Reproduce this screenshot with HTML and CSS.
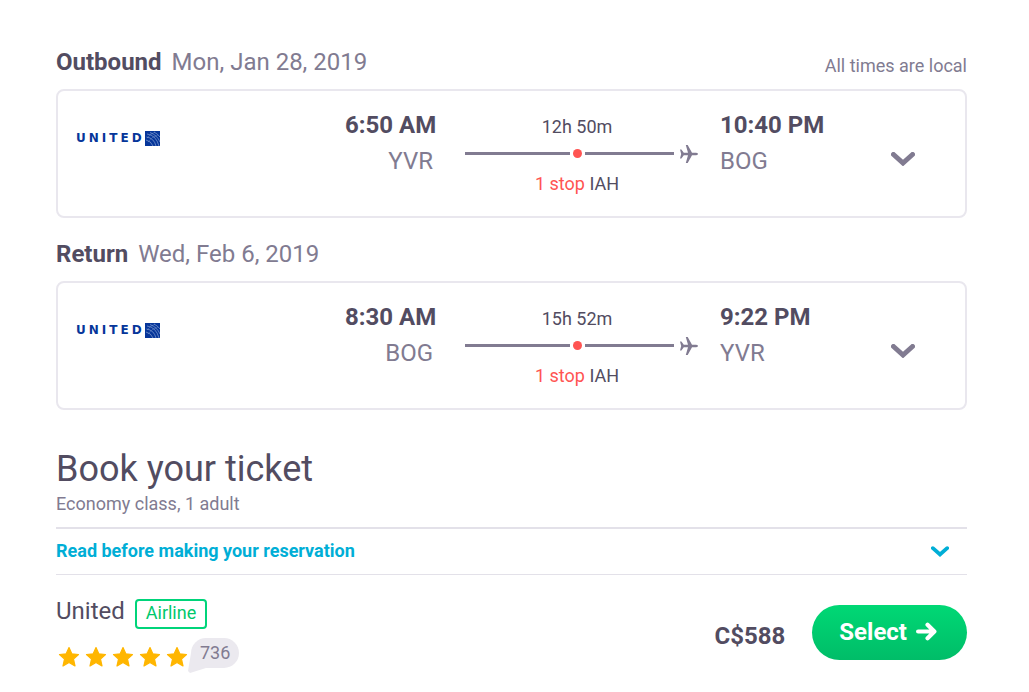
FILE: index.html
```html
<!DOCTYPE html>
<html lang="en">
<head>
    <meta charset="utf-8">
    <title>Book your ticket</title>
    <link rel="stylesheet" href="styles.css">
</head>
<body>
    <!-- shared icons -->
    <svg class="sprite" width="0" height="0">
        <symbol id="chevron" viewBox="0 0 24 14">
            <path d="M2.500 2.500L12 11l9.500-8.500" fill="none" stroke="currentColor" stroke-width="5" stroke-linecap="round"/>
        </symbol>
        <symbol id="plane" viewBox="0 0 18 18">
            <path d="M0 4.500h1.400L3.800 7.800H8L5.800 0h1.900L12 7.800h4.200c2.400.5 2.400 1.900 0 2.400H12L7.700 18H5.800L8 10.200H3.800L1.400 13.500H0L1.200 9z" fill="currentColor"/>
        </symbol>
        <symbol id="star" viewBox="0 0 22 22">
            <path d="M11 1.500l2.800 6.300 6.700.7-5 4.600 1.500 6.900-6-3.600-6 3.600 1.500-6.900-5-4.600 6.700-.7z" fill="currentColor" stroke="currentColor" stroke-width="1.200" stroke-linejoin="round"/>
        </symbol>
        <symbol id="globe" viewBox="0 0 15 15">
            <path d="M0 0h15v15H0z" fill="#06369a"/>
            <path d="M2 3Q11 4 14 15M1.500 6Q9 7 11 15M1 9Q6 10 8 15M5 1.500Q12 4 15 11M9 1Q13 3 15 6" fill="none" stroke="#9db3dd" stroke-width=".6"/>
            <path d="M2 7Q5 3 10 1M3 11Q6 6 13 4" fill="none" stroke="#9db3dd" stroke-width=".3"/>
        </symbol>
    </svg>

    <main class="page">
        <section class="trip">
            <div class="trip-head">
                <h2 class="trip-title">Outbound <span class="trip-date">Mon, Jan 28, 2019</span></h2>
                <span class="note">All times are local</span>
            </div>
            <div class="card">
                <div class="logo">UNITED<svg class="logo-mark"><use href="#globe"/></svg></div>
                <div class="point depart">
                    <div class="time">6:50 AM</div>
                    <div class="airport">YVR</div>
                </div>
                <div class="route">
                    <div class="route-text">12h 50m</div>
                    <div class="track">
                        <span class="line first"></span>
                        <span class="dot"></span>
                        <span class="line"></span>
                        <svg class="plane"><use href="#plane"/></svg>
                    </div>
                    <div class="route-text"><span class="stop">1 stop</span> IAH</div>
                </div>
                <div class="point">
                    <div class="time">10:40 PM</div>
                    <div class="airport">BOG</div>
                </div>
                <button class="toggle" type="button" aria-label="Outbound details"><svg class="chevron"><use href="#chevron"/></svg></button>
            </div>
        </section>

        <section class="trip">
            <div class="trip-head">
                <h2 class="trip-title">Return <span class="trip-date">Wed, Feb 6, 2019</span></h2>
            </div>
            <div class="card">
                <div class="logo">UNITED<svg class="logo-mark"><use href="#globe"/></svg></div>
                <div class="point depart">
                    <div class="time">8:30 AM</div>
                    <div class="airport">BOG</div>
                </div>
                <div class="route">
                    <div class="route-text">15h 52m</div>
                    <div class="track">
                        <span class="line first"></span>
                        <span class="dot"></span>
                        <span class="line"></span>
                        <svg class="plane"><use href="#plane"/></svg>
                    </div>
                    <div class="route-text"><span class="stop">1 stop</span> IAH</div>
                </div>
                <div class="point">
                    <div class="time">9:22 PM</div>
                    <div class="airport">YVR</div>
                </div>
                <button class="toggle" type="button" aria-label="Return details"><svg class="chevron"><use href="#chevron"/></svg></button>
            </div>
        </section>

        <section class="booking">
            <h1 class="booking-title">Book your ticket</h1>
            <p class="booking-class">Economy class, 1 adult</p>
            <button class="read" type="button">Read before making your reservation
                <svg class="chevron small"><use href="#chevron"/></svg>
            </button>
            <div class="offer">
                <div class="seller">
                    <div class="seller-name">United <span class="tag">Airline</span></div>
                    <div class="rating">
                        <svg class="star"><use href="#star"/></svg>
                        <svg class="star"><use href="#star"/></svg>
                        <svg class="star"><use href="#star"/></svg>
                        <svg class="star"><use href="#star"/></svg>
                        <svg class="star"><use href="#star"/></svg>
                        <span class="reviews">736</span>
                    </div>
                </div>
                <div class="price">C$588</div>
                <button class="select" type="button">Select
                    <svg class="arrow" viewBox="0 0 20 18"><path d="M2 9h15M11 2.500L17.500 9 11 15.500" fill="none" stroke="currentColor" stroke-width="4" stroke-linecap="round" stroke-linejoin="round"/></svg>
                </button>
            </div>
        </section>
    </main>
</body>
</html>
```
FILE: styles.css
```css
* {
    box-sizing: border-box;
}
body {
    margin: 0;
    background: #fff;
    color: #524c61;
    font-family: Roboto, "Liberation Sans", sans-serif;
    font-size: 18px;
    line-height: 24px;
}
h1, h2, p {
    margin: 0;
    font-weight: 400;
}
button {
    padding: 0;
    border: 0;
    background: none;
    color: inherit;
    font: inherit;
    cursor: pointer;
}
svg {
    display: block;
    flex: none;
}
.sprite {
    position: absolute;
}
.page {
    padding: 44px 62px 16px 56px;
}

/* flights */
.trip {
    margin-bottom: 18px;
}
.trip-head {
    display: flex;
    justify-content: space-between;
    align-items: flex-end;
    padding-bottom: 9px;
}
.trip-title {
    display: flex;
    gap: 10px;
    font-size: 24px;
    line-height: 36px;
    font-weight: 700;
}
.trip-date {
    color: #817b91;
    font-weight: 400;
}
.note {
    color: #817b91;
    line-height: 28px;
}
.card {
    display: grid;
    grid-template-columns: 1fr 120px 233px 193px 24px;
    padding: 16px 50px 5px 18px;
    border: 2px solid #e9e7ee;
    border-radius: 8px;
}
.logo {
    display: flex;
    height: 62px;
    align-items: center;
    color: #06369a;
    font: bold 12px "DejaVu Sans", sans-serif;
    letter-spacing: 3px;
}
.logo-mark {
    width: 15px;
    height: 15px;
}
.point {
    padding-left: 22px;
    font-size: 24px;
    line-height: 36px;
}
.depart {
    padding: 0 32px 0 0;
    text-align: right;
}
.time {
    font-weight: 700;
    white-space: nowrap;
}
.airport {
    color: #817b91;
}
.route {
    padding-top: 8px;
}
.route-text {
    padding-right: 9px;
    text-align: center;
}
.track {
    display: flex;
    align-items: center;
    gap: 3px;
    height: 29px;
    margin-bottom: 4px;
}
.line {
    flex: 1;
    height: 3px;
    background: #817b91;
}
.first {
    flex: 0 0 105px;
}
.dot {
    width: 9px;
    height: 9px;
    border-radius: 50%;
    background: #ff5452;
}
.plane {
    width: 18px;
    height: 18px;
    margin-left: 3px;
    color: #817b91;
}
.stop {
    color: #ff5452;
}
.toggle {
    height: 104px;
    color: #817b91;
}
.chevron {
    width: 24px;
    height: 14px;
}

/* booking */
.booking {
    padding-top: 18px;
}
.booking-title {
    font-size: 36px;
    line-height: 46px;
}
.booking-class {
    padding-bottom: 11px;
    border-bottom: 2px solid #e3e1e9;
    color: #817b91;
}
.read {
    display: flex;
    justify-content: space-between;
    align-items: center;
    width: 100%;
    height: 46px;
    padding: 0 18px 1px 0;
    border-bottom: 1px solid #e3e1e9;
    color: #00aed6;
    font-weight: 700;
}
.small {
    width: 18px;
    height: 11px;
}
.offer {
    display: flex;
    align-items: center;
    padding-top: 18px;
}
.seller {
    flex: 1;
}
.seller-name {
    display: flex;
    align-items: flex-end;
    gap: 10px;
    font-size: 24px;
    line-height: 36px;
}
.tag {
    padding: 0 9px 2px;
    border: 2px solid #00d47a;
    border-radius: 4px;
    color: #00c86c;
    font-size: 18px;
    line-height: 24px;
}
.rating {
    display: flex;
    align-items: flex-end;
    gap: 5px;
    padding: 9px 0 4px 2px;
    color: #ffb600;
}
.star {
    width: 22px;
    height: 22px;
}
.reviews {
    position: relative;
    margin-left: -2px;
    padding: 0 9px;
    border-radius: 15px;
    background: #ebe9ef;
    color: #817b91;
    line-height: 30px;
}
/* tail of the bubble */
.reviews::before {
    content: "";
    position: absolute;
    left: -3px;
    bottom: -5px;
    width: 18px;
    height: 20px;
    background: inherit;
    clip-path: polygon(3px 0, 18px 15px, 2px 20px, 0 18px);
    z-index: -1;
}
.price {
    margin-right: 27px;
    padding-top: 6px;
    font-size: 24px;
    font-weight: 700;
}
.select {
    display: flex;
    align-items: center;
    gap: 9px;
    height: 55px;
    padding: 0 30px 2px 27px;
    border-radius: 28px;
    background: linear-gradient(#00d875, #00bd68);
    color: #fff;
    font-size: 24px;
    font-weight: 700;
}
.arrow {
    width: 21px;
    height: 19px;
}
```
